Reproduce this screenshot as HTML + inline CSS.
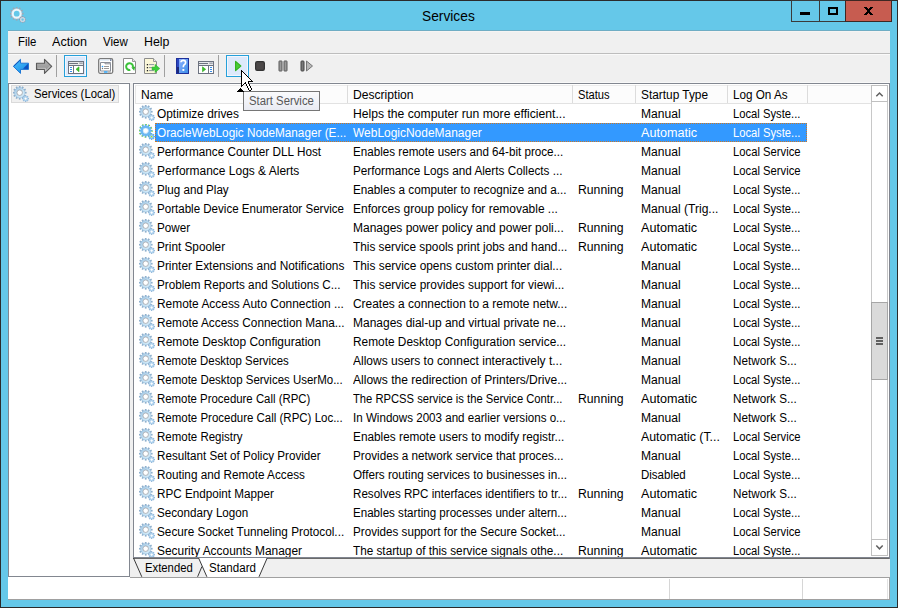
<!DOCTYPE html>
<html><head><meta charset="utf-8">
<style>
*{margin:0;padding:0;box-sizing:border-box}
html,body{width:898px;height:608px;overflow:hidden}
body{position:relative;background:#65c8e9;font-family:"Liberation Sans",sans-serif;font-size:12px;color:#000}
.a{position:absolute}
.t{position:absolute;white-space:pre;line-height:14px;transform-origin:0 0}
svg{position:absolute;display:block}
</style></head><body>
<svg width="0" height="0" style="position:absolute"><defs><symbol id="gear" viewBox="0 0 16 16"><g fill="#8eafcc"><rect x="5.85" y="-0.20" width="1.7" height="2.4" transform="rotate(0 6.7 6.7)"/><rect x="5.85" y="-0.20" width="1.7" height="2.4" transform="rotate(30 6.7 6.7)"/><rect x="5.85" y="-0.20" width="1.7" height="2.4" transform="rotate(60 6.7 6.7)"/><rect x="5.85" y="-0.20" width="1.7" height="2.4" transform="rotate(90 6.7 6.7)"/><rect x="5.85" y="-0.20" width="1.7" height="2.4" transform="rotate(120 6.7 6.7)"/><rect x="5.85" y="-0.20" width="1.7" height="2.4" transform="rotate(150 6.7 6.7)"/><rect x="5.85" y="-0.20" width="1.7" height="2.4" transform="rotate(180 6.7 6.7)"/><rect x="5.85" y="-0.20" width="1.7" height="2.4" transform="rotate(210 6.7 6.7)"/><rect x="5.85" y="-0.20" width="1.7" height="2.4" transform="rotate(240 6.7 6.7)"/><rect x="5.85" y="-0.20" width="1.7" height="2.4" transform="rotate(270 6.7 6.7)"/><rect x="5.85" y="-0.20" width="1.7" height="2.4" transform="rotate(300 6.7 6.7)"/><rect x="5.85" y="-0.20" width="1.7" height="2.4" transform="rotate(330 6.7 6.7)"/></g><linearGradient id="gr" x1="0" y1="0" x2="1" y2="1"><stop offset="0" stop-color="#a9cde8"/><stop offset="1" stop-color="#d6eefb"/></linearGradient><circle cx="6.7" cy="6.7" r="4.05" fill="none" stroke="url(#gr)" stroke-width="2.5"/><circle cx="6.7" cy="6.7" r="5.25" fill="none" stroke="#93b6d6" stroke-width="0.5"/><circle cx="6.7" cy="6.7" r="2.75" fill="#fff" stroke="#8f959e" stroke-width="0.7"/><g fill="#8fb3d6"><rect x="11.90" y="9.20" width="1.4" height="1.6" transform="rotate(0 12.6 12.6)"/><rect x="11.90" y="9.20" width="1.4" height="1.6" transform="rotate(45 12.6 12.6)"/><rect x="11.90" y="9.20" width="1.4" height="1.6" transform="rotate(90 12.6 12.6)"/><rect x="11.90" y="9.20" width="1.4" height="1.6" transform="rotate(135 12.6 12.6)"/><rect x="11.90" y="9.20" width="1.4" height="1.6" transform="rotate(180 12.6 12.6)"/><rect x="11.90" y="9.20" width="1.4" height="1.6" transform="rotate(225 12.6 12.6)"/><rect x="11.90" y="9.20" width="1.4" height="1.6" transform="rotate(270 12.6 12.6)"/><rect x="11.90" y="9.20" width="1.4" height="1.6" transform="rotate(315 12.6 12.6)"/></g><circle cx="12.6" cy="12.6" r="1.9" fill="none" stroke="#acd0ec" stroke-width="1.6"/><circle cx="12.6" cy="12.6" r="0.9" fill="#fff"/></symbol><symbol id="gsel" viewBox="0 0 16 16"><g fill="#58ace8"><rect x="5.85" y="-0.20" width="1.7" height="2.4" transform="rotate(0 6.7 6.7)"/><rect x="5.85" y="-0.20" width="1.7" height="2.4" transform="rotate(30 6.7 6.7)"/><rect x="5.85" y="-0.20" width="1.7" height="2.4" transform="rotate(60 6.7 6.7)"/><rect x="5.85" y="-0.20" width="1.7" height="2.4" transform="rotate(90 6.7 6.7)"/><rect x="5.85" y="-0.20" width="1.7" height="2.4" transform="rotate(120 6.7 6.7)"/><rect x="5.85" y="-0.20" width="1.7" height="2.4" transform="rotate(150 6.7 6.7)"/><rect x="5.85" y="-0.20" width="1.7" height="2.4" transform="rotate(180 6.7 6.7)"/><rect x="5.85" y="-0.20" width="1.7" height="2.4" transform="rotate(210 6.7 6.7)"/><rect x="5.85" y="-0.20" width="1.7" height="2.4" transform="rotate(240 6.7 6.7)"/><rect x="5.85" y="-0.20" width="1.7" height="2.4" transform="rotate(270 6.7 6.7)"/><rect x="5.85" y="-0.20" width="1.7" height="2.4" transform="rotate(300 6.7 6.7)"/><rect x="5.85" y="-0.20" width="1.7" height="2.4" transform="rotate(330 6.7 6.7)"/></g><g fill="#8cd81a"><rect x="5.80" y="-0.30" width="1.1" height="1.1" transform="rotate(8 6.7 6.7)"/><rect x="5.80" y="-0.30" width="1.1" height="1.1" transform="rotate(38 6.7 6.7)"/><rect x="5.80" y="-0.30" width="1.1" height="1.1" transform="rotate(68 6.7 6.7)"/><rect x="5.80" y="-0.30" width="1.1" height="1.1" transform="rotate(98 6.7 6.7)"/><rect x="5.80" y="-0.30" width="1.1" height="1.1" transform="rotate(128 6.7 6.7)"/><rect x="5.80" y="-0.30" width="1.1" height="1.1" transform="rotate(158 6.7 6.7)"/><rect x="5.80" y="-0.30" width="1.1" height="1.1" transform="rotate(188 6.7 6.7)"/><rect x="5.80" y="-0.30" width="1.1" height="1.1" transform="rotate(218 6.7 6.7)"/><rect x="5.80" y="-0.30" width="1.1" height="1.1" transform="rotate(248 6.7 6.7)"/><rect x="5.80" y="-0.30" width="1.1" height="1.1" transform="rotate(278 6.7 6.7)"/><rect x="5.80" y="-0.30" width="1.1" height="1.1" transform="rotate(308 6.7 6.7)"/><rect x="5.80" y="-0.30" width="1.1" height="1.1" transform="rotate(338 6.7 6.7)"/></g><circle cx="6.7" cy="6.7" r="4.05" fill="none" stroke="#6ab8f2" stroke-width="2.5"/><circle cx="6.7" cy="6.7" r="2.75" fill="#fff" stroke="#7fbff0" stroke-width="0.5"/><g fill="#5aaae6"><rect x="11.90" y="9.20" width="1.4" height="1.6" transform="rotate(0 12.6 12.6)"/><rect x="11.90" y="9.20" width="1.4" height="1.6" transform="rotate(45 12.6 12.6)"/><rect x="11.90" y="9.20" width="1.4" height="1.6" transform="rotate(90 12.6 12.6)"/><rect x="11.90" y="9.20" width="1.4" height="1.6" transform="rotate(135 12.6 12.6)"/><rect x="11.90" y="9.20" width="1.4" height="1.6" transform="rotate(180 12.6 12.6)"/><rect x="11.90" y="9.20" width="1.4" height="1.6" transform="rotate(225 12.6 12.6)"/><rect x="11.90" y="9.20" width="1.4" height="1.6" transform="rotate(270 12.6 12.6)"/><rect x="11.90" y="9.20" width="1.4" height="1.6" transform="rotate(315 12.6 12.6)"/></g><circle cx="12.6" cy="12.6" r="1.9" fill="none" stroke="#78bdf0" stroke-width="1.6"/><circle cx="12.6" cy="12.6" r="0.9" fill="#9be030"/></symbol></defs></svg>
<div class="a" style="left:0;top:0;width:898px;height:608px;border:1px solid #2b2b2b"></div>
<div class="a" style="left:8px;top:30px;width:882px;height:570px;background:#f0f0f0"></div>
<div class="a" style="left:8px;top:30px;width:882px;height:1px;background:#6fadc4"></div>
<div class="a" style="left:8px;top:31px;width:882px;height:1px;background:#f6f4f3"></div>
<svg style="left:10px;top:7px" width="16" height="16" viewBox="0 0 16 16"><rect x="5.85" y="-0.2" width="1.7" height="2.4" fill="#9aa6b4" transform="rotate(0 6.7 6.7)"/><rect x="5.85" y="-0.2" width="1.7" height="2.4" fill="#9aa6b4" transform="rotate(30 6.7 6.7)"/><rect x="5.85" y="-0.2" width="1.7" height="2.4" fill="#9aa6b4" transform="rotate(60 6.7 6.7)"/><rect x="5.85" y="-0.2" width="1.7" height="2.4" fill="#9aa6b4" transform="rotate(90 6.7 6.7)"/><rect x="5.85" y="-0.2" width="1.7" height="2.4" fill="#9aa6b4" transform="rotate(120 6.7 6.7)"/><rect x="5.85" y="-0.2" width="1.7" height="2.4" fill="#9aa6b4" transform="rotate(150 6.7 6.7)"/><rect x="5.85" y="-0.2" width="1.7" height="2.4" fill="#9aa6b4" transform="rotate(180 6.7 6.7)"/><rect x="5.85" y="-0.2" width="1.7" height="2.4" fill="#9aa6b4" transform="rotate(210 6.7 6.7)"/><rect x="5.85" y="-0.2" width="1.7" height="2.4" fill="#9aa6b4" transform="rotate(240 6.7 6.7)"/><rect x="5.85" y="-0.2" width="1.7" height="2.4" fill="#9aa6b4" transform="rotate(270 6.7 6.7)"/><rect x="5.85" y="-0.2" width="1.7" height="2.4" fill="#9aa6b4" transform="rotate(300 6.7 6.7)"/><rect x="5.85" y="-0.2" width="1.7" height="2.4" fill="#9aa6b4" transform="rotate(330 6.7 6.7)"/><circle cx="6.7" cy="6.7" r="4.1" fill="none" stroke="#eef6fb" stroke-width="2.4"/><circle cx="6.7" cy="6.7" r="5.25" fill="none" stroke="#a9b9c9" stroke-width="0.5"/><rect x="11.9" y="9.2" width="1.4" height="1.6" fill="#8b9bb0" transform="rotate(0 12.6 12.6)"/><rect x="11.9" y="9.2" width="1.4" height="1.6" fill="#8b9bb0" transform="rotate(45 12.6 12.6)"/><rect x="11.9" y="9.2" width="1.4" height="1.6" fill="#8b9bb0" transform="rotate(90 12.6 12.6)"/><rect x="11.9" y="9.2" width="1.4" height="1.6" fill="#8b9bb0" transform="rotate(135 12.6 12.6)"/><rect x="11.9" y="9.2" width="1.4" height="1.6" fill="#8b9bb0" transform="rotate(180 12.6 12.6)"/><rect x="11.9" y="9.2" width="1.4" height="1.6" fill="#8b9bb0" transform="rotate(225 12.6 12.6)"/><rect x="11.9" y="9.2" width="1.4" height="1.6" fill="#8b9bb0" transform="rotate(270 12.6 12.6)"/><rect x="11.9" y="9.2" width="1.4" height="1.6" fill="#8b9bb0" transform="rotate(315 12.6 12.6)"/><circle cx="12.6" cy="12.6" r="1.9" fill="none" stroke="#c9d6e2" stroke-width="1.5"/></svg>
<div class="t" style="left:422px;top:6px;font-size:15.5px;line-height:20px;transform:scaleX(0.8881);">Services</div>
<div class="a" style="left:791px;top:0;width:55px;height:22px;border:1px solid #3a3a3a;background:#65c8e9"></div>
<div class="a" style="left:819px;top:0;width:1px;height:22px;background:#3a3a3a"></div>
<div class="a" style="left:845px;top:0;width:47px;height:22px;border:1px solid #3d2723;background:#c75c50"></div>
<div class="a" style="left:800px;top:12px;width:10px;height:3px;background:#000"></div>
<div class="a" style="left:828px;top:7px;width:10px;height:8px;border:2px solid #000"></div>
<svg style="left:864px;top:7px" width="9" height="8" viewBox="0 0 9 8" shape-rendering="crispEdges"><path d="M0 0h1v1h-1zM1 0h1v1h-1zM2 0h1v1h-1zM6 0h1v1h-1zM7 0h1v1h-1zM8 0h1v1h-1zM1 1h1v1h-1zM2 1h1v1h-1zM3 1h1v1h-1zM5 1h1v1h-1zM6 1h1v1h-1zM7 1h1v1h-1zM2 2h1v1h-1zM3 2h1v1h-1zM4 2h1v1h-1zM5 2h1v1h-1zM6 2h1v1h-1zM3 3h1v1h-1zM4 3h1v1h-1zM5 3h1v1h-1zM3 4h1v1h-1zM4 4h1v1h-1zM5 4h1v1h-1zM2 5h1v1h-1zM3 5h1v1h-1zM4 5h1v1h-1zM5 5h1v1h-1zM6 5h1v1h-1zM1 6h1v1h-1zM2 6h1v1h-1zM3 6h1v1h-1zM5 6h1v1h-1zM6 6h1v1h-1zM7 6h1v1h-1zM0 7h1v1h-1zM1 7h1v1h-1zM2 7h1v1h-1zM6 7h1v1h-1zM7 7h1v1h-1zM8 7h1v1h-1z" fill="#000"/></svg>
<div class="t" style="left:18px;top:35px;transform:scaleX(0.9474);">File</div>
<div class="t" style="left:52px;top:35px;transform:scaleX(1.0485);">Action</div>
<div class="t" style="left:103px;top:35px;transform:scaleX(0.9577);">View</div>
<div class="t" style="left:144px;top:35px;transform:scaleX(1.0292);">Help</div>
<div class="a" style="left:8px;top:53px;width:882px;height:1px;background:#bdbdbd"></div>
<div class="a" style="left:8px;top:54px;width:882px;height:1px;background:#fafafa"></div>
<div class="a" style="left:56px;top:55px;width:1px;height:22px;background:#a0a0a0"></div>
<div class="a" style="left:164px;top:55px;width:1px;height:22px;background:#a0a0a0"></div>
<div class="a" style="left:218px;top:55px;width:1px;height:22px;background:#a0a0a0"></div>
<div class="a" style="left:64px;top:55px;width:23px;height:22px;border:1px solid #26a0da;background:#dde9fb;box-shadow:inset 0 0 0 1px #f2f7fe"></div>
<div class="a" style="left:226px;top:55px;width:23px;height:22px;border:1px solid #26a0da;background:#dde9fb;box-shadow:inset 0 0 0 1px #f2f7fe"></div>
<svg style="left:12px;top:58px" width="18" height="17" viewBox="0 0 18 17"><defs><linearGradient id="gb" x1="0" y1="0" x2="1" y2="1"><stop offset="0" stop-color="#4cc0ff"/><stop offset="0.6" stop-color="#2aa0ee"/><stop offset="1" stop-color="#0a58c8"/></linearGradient></defs><path d="M1.3 8.3L8.5 1.3V5.2H16.5V11.4H8.5V15.4Z" fill="url(#gb)" stroke="#1f78d6" stroke-width="1" stroke-linejoin="round"/><path d="M1.8 8.3L8 2.3" stroke="#1050b8" stroke-width="1"/><path d="M11 10.8L16 5.8V11Z" fill="#0c4fc0"/></svg>
<svg style="left:35px;top:58px" width="18" height="17" viewBox="0 0 18 17"><defs><linearGradient id="gf" x1="0" y1="0" x2="0" y2="1"><stop offset="0" stop-color="#b4b4b4"/><stop offset="1" stop-color="#8c8c8c"/></linearGradient></defs><path d="M16.7 8.3L9.5 1.3V5.2H1.5V11.4H9.5V15.4Z" fill="url(#gf)" stroke="#5a5a5a" stroke-width="1.1" stroke-linejoin="round"/><path d="M2.6 10.3H10.4V13L15.2 8.3" fill="none" stroke="#d8d8d8" stroke-width="0.7"/></svg>
<svg style="left:68px;top:61px" width="16" height="13" viewBox="0 0 16 13"><rect x="0.5" y="0.5" width="15" height="12" fill="#fff" stroke="#6d7380"/><rect x="1" y="1" width="14" height="4" fill="#e8e9ec"/><path d="M1 2.5H10M1 4.5H15" stroke="#6d7380" stroke-width="1"/><rect x="11.5" y="1.6" width="1.2" height="1.2" fill="#6d7380"/><rect x="13.3" y="1.6" width="1.2" height="1.2" fill="#6d7380"/><path d="M5.5 5V12.5" stroke="#6d7380"/><path d="M2 6.5H4M2 8.5H4M2 10.5H4" stroke="#3a8ee8" stroke-width="1"/><path d="M8 8.3L11 5.8V10.8Z" fill="#3cbf2a" stroke="#2fa81e" stroke-width="0.6"/></svg>
<svg style="left:98px;top:58px" width="16" height="16" viewBox="0 0 16 16"><rect x="0.7" y="0.7" width="14" height="14.6" rx="1.5" fill="#fff" stroke="#7a7a7a" stroke-width="1.3"/><rect x="2" y="1.6" width="9" height="1" fill="#d6e6f7"/><rect x="12" y="1.4" width="1.4" height="1.4" fill="#566890"/><path d="M2.5 4.5H7V5.8H12.5V13H2.5Z" fill="#fff" stroke="#8a8e98" stroke-width="1"/><path d="M7 4.5H12.5V5.8" fill="none" stroke="#8a8e98" stroke-width="1"/><circle cx="4.5" cy="8.5" r="0.8" fill="#2aa0ff"/><circle cx="4.5" cy="10.5" r="0.7" fill="#777"/><path d="M6 8.5H11M6 10.5H11" stroke="#999" stroke-width="1"/><rect x="6" y="13.3" width="3.5" height="1.4" fill="#2aa8ff"/><rect x="10" y="13.3" width="3" height="1.4" fill="#b0b0b0"/></svg>
<svg style="left:123px;top:58px" width="14" height="16" viewBox="0 0 14 16"><path d="M0.5 0.5H9.5L12.5 3.5V15.5H0.5Z" fill="#fff" stroke="#8c8c8c" stroke-width="1"/><path d="M9.5 0.5V3.5H12.5" fill="#e8e8e8" stroke="#9a9a9a" stroke-width="1"/><path d="M7.3 11.9A3.4 3.4 0 1 1 9.9 9.2" fill="none" stroke="#3cc23a" stroke-width="2"/><path d="M8.3 9.6L12.3 8.6L11.2 12.8Z" fill="#34b832"/></svg>
<svg style="left:144px;top:58px" width="17" height="16" viewBox="0 0 17 16"><path d="M0.5 0.5H9.5L12.5 3.5V15.5H0.5Z" fill="#fbf7d8" stroke="#8c8c8c" stroke-width="1"/><path d="M9.5 0.5V3.5H12.5" fill="#eee" stroke="#9a9a9a" stroke-width="1"/><rect x="2.8" y="6" width="1.3" height="1.3" fill="#222"/><rect x="2.8" y="9" width="1.3" height="1.3" fill="#222"/><rect x="2.8" y="12" width="1.3" height="1.3" fill="#222"/><path d="M5 6.6H10M5 9.6H10M5 12.6H10" stroke="#8d94a0" stroke-width="1"/><path d="M8 9H11V6.3L15.8 10.5L11 14.7V12H8Z" fill="#3ccc3a" stroke="#34b232" stroke-width="0.5"/></svg>
<svg style="left:176px;top:58px" width="13" height="16" viewBox="0 0 13 16"><defs><linearGradient id="gh" x1="0" y1="0" x2="1" y2="1"><stop offset="0" stop-color="#8cb0ff"/><stop offset="1" stop-color="#3c8ee8"/></linearGradient></defs><rect x="0" y="0" width="13" height="16" fill="#1d2f9a"/><rect x="3" y="1" width="9" height="14" fill="url(#gh)"/><rect x="1" y="1" width="2" height="8" fill="#2a47c0"/><rect x="1" y="9" width="2" height="6" fill="#1d2a7a"/><path d="M5 4.3Q5 2.3 7.3 2.3Q9.6 2.3 9.6 4.5Q9.6 6 8.2 6.8Q7.3 7.4 7.3 9.3" fill="none" stroke="#fff" stroke-width="1.7"/><rect x="6.4" y="11" width="1.9" height="1.9" fill="#fff"/></svg>
<svg style="left:198px;top:61px" width="16" height="13" viewBox="0 0 16 13"><rect x="0.5" y="0.5" width="15" height="12" fill="#fff" stroke="#6d7380"/><rect x="1" y="1" width="14" height="4" fill="#e8e9ec"/><path d="M1 2.5H10M1 4.5H15" stroke="#6d7380" stroke-width="1"/><rect x="11.5" y="1.6" width="1.2" height="1.2" fill="#6d7380"/><rect x="13.3" y="1.6" width="1.2" height="1.2" fill="#6d7380"/><path d="M10.5 5V12.5" stroke="#6d7380"/><path d="M12 6.5H14M12 8.5H14M12 10.5H14" stroke="#3a8ee8" stroke-width="1"/><path d="M4.5 5.8L7.7 8.3L4.5 10.8Z" fill="#3cbf2a" stroke="#2fa81e" stroke-width="0.6"/></svg>
<svg style="left:234px;top:60px" width="8" height="12" viewBox="0 0 8 12"><path d="M1.6 1.4L6.8 6L1.6 10.6Z" fill="#4ccc3a" stroke="#33b322" stroke-width="1.2" stroke-linejoin="round"/></svg>
<svg style="left:255px;top:61px" width="10" height="10" viewBox="0 0 10 10"><rect x="0.6" y="0.6" width="8.8" height="8.8" rx="1.6" fill="#4c4848" stroke="#333" stroke-width="1.2"/></svg>
<svg style="left:278px;top:60px" width="10" height="12" viewBox="0 0 10 12"><rect x="1" y="1" width="3" height="10" rx="0.4" fill="#9a9a9a" stroke="#595959" stroke-width="1"/><rect x="6" y="1" width="3" height="10" rx="0.4" fill="#9a9a9a" stroke="#595959" stroke-width="1"/></svg>
<svg style="left:300px;top:60px" width="14" height="12" viewBox="0 0 14 12"><rect x="1" y="1" width="3" height="10" rx="0.8" fill="#7a7a7a" stroke="#444" stroke-width="1"/><path d="M6.5 1L12.5 6L6.5 11Z" fill="#b8b8b8" stroke="#777" stroke-width="1" stroke-linejoin="round"/></svg>
<div class="a" style="left:8px;top:82px;width:882px;height:1px;background:#f8f8f8"></div>
<div class="a" style="left:8px;top:83px;width:122px;height:494px;background:#fff;border:1px solid #828790"></div>
<div class="a" style="left:11px;top:85px;width:108px;height:18px;background:#f0f0f0;border:1px solid #dadada"></div>
<svg style="left:13px;top:86px" width="16" height="16" viewBox="0 0 16 16"><use href="#gear"/></svg>
<div class="t" style="left:34px;top:87px;transform:scaleX(0.9447);">Services (Local)</div>
<div class="a" style="left:133px;top:83px;width:757px;height:476px;background:#fff;border:1px solid #828790;border-right:none"></div>
<div class="a" style="left:135px;top:85px;width:736px;height:19px;background:#fcfcfc;border-top:1px solid #ececec;border-left:1px solid #e6e6e6;border-bottom:1px solid #e2e2e2"></div>
<div class="a" style="left:347px;top:85px;width:1px;height:18px;background:#dcdcdc"></div>
<div class="a" style="left:572px;top:85px;width:1px;height:18px;background:#dcdcdc"></div>
<div class="a" style="left:635px;top:85px;width:1px;height:18px;background:#dcdcdc"></div>
<div class="a" style="left:727px;top:85px;width:1px;height:18px;background:#dcdcdc"></div>
<div class="a" style="left:807px;top:85px;width:1px;height:18px;background:#dcdcdc"></div>
<div class="t" style="left:141px;top:88px;transform:scaleX(1.0062);">Name</div>
<div class="t" style="left:353px;top:88px;transform:scaleX(1.0085);">Description</div>
<div class="t" style="left:578px;top:88px;transform:scaleX(0.9294);">Status</div>
<div class="t" style="left:641px;top:88px;transform:scaleX(0.9882);">Startup Type</div>
<div class="t" style="left:733px;top:88px;transform:scaleX(0.9750);">Log On As</div>
<div class="a" style="left:155px;top:123px;width:652px;height:19px;background:#3399ff"></div>
<div class="a" style="left:155px;top:123px;width:652px;height:19px;border:1px dotted #cc7722"></div>
<svg style="left:139px;top:105px" width="16" height="16" viewBox="0 0 16 16"><use href="#gear"/></svg>
<div class="t" style="left:157px;top:107px;transform:scaleX(0.9902);">Optimize drives</div>
<div class="t" style="left:353px;top:107px;transform:scaleX(1.0129);">Helps the computer run more efficient...</div>
<div class="t" style="left:641px;top:107px;transform:scaleX(1.0077);">Manual</div>
<div class="t" style="left:733px;top:107px;transform:scaleX(0.9366);">Local Syste...</div>
<svg style="left:139px;top:124px" width="16" height="16" viewBox="0 0 16 16"><use href="#gsel"/></svg>
<div class="t" style="left:157px;top:126px;color:#fff;transform:scaleX(0.9792);">OracleWebLogic NodeManager (E...</div>
<div class="t" style="left:353px;top:126px;color:#fff;transform:scaleX(0.9969);">WebLogicNodeManager</div>
<div class="t" style="left:641px;top:126px;color:#fff;transform:scaleX(1.0509);">Automatic</div>
<div class="t" style="left:733px;top:126px;color:#fff;transform:scaleX(0.9366);">Local Syste...</div>
<svg style="left:139px;top:143px" width="16" height="16" viewBox="0 0 16 16"><use href="#gear"/></svg>
<div class="t" style="left:157px;top:145px;transform:scaleX(0.9786);">Performance Counter DLL Host</div>
<div class="t" style="left:353px;top:145px;transform:scaleX(0.9699);">Enables remote users and 64-bit proce...</div>
<div class="t" style="left:641px;top:145px;transform:scaleX(1.0077);">Manual</div>
<div class="t" style="left:733px;top:145px;transform:scaleX(0.9389);">Local Service</div>
<svg style="left:139px;top:162px" width="16" height="16" viewBox="0 0 16 16"><use href="#gear"/></svg>
<div class="t" style="left:157px;top:164px;transform:scaleX(0.9972);">Performance Logs &amp; Alerts</div>
<div class="t" style="left:353px;top:164px;transform:scaleX(0.9784);">Performance Logs and Alerts Collects ...</div>
<div class="t" style="left:641px;top:164px;transform:scaleX(1.0077);">Manual</div>
<div class="t" style="left:733px;top:164px;transform:scaleX(0.9389);">Local Service</div>
<svg style="left:139px;top:181px" width="16" height="16" viewBox="0 0 16 16"><use href="#gear"/></svg>
<div class="t" style="left:157px;top:183px;transform:scaleX(0.9676);">Plug and Play</div>
<div class="t" style="left:353px;top:183px;transform:scaleX(0.9761);">Enables a computer to recognize and a...</div>
<div class="t" style="left:578px;top:183px;transform:scaleX(1.0182);">Running</div>
<div class="t" style="left:641px;top:183px;transform:scaleX(1.0077);">Manual</div>
<div class="t" style="left:733px;top:183px;transform:scaleX(0.9366);">Local Syste...</div>
<svg style="left:139px;top:200px" width="16" height="16" viewBox="0 0 16 16"><use href="#gear"/></svg>
<div class="t" style="left:157px;top:202px;transform:scaleX(0.9634);">Portable Device Enumerator Service</div>
<div class="t" style="left:353px;top:202px;transform:scaleX(0.9971);">Enforces group policy for removable ...</div>
<div class="t" style="left:641px;top:202px;transform:scaleX(1.0066);">Manual (Trig...</div>
<div class="t" style="left:733px;top:202px;transform:scaleX(0.9366);">Local Syste...</div>
<svg style="left:139px;top:219px" width="16" height="16" viewBox="0 0 16 16"><use href="#gear"/></svg>
<div class="t" style="left:157px;top:221px;transform:scaleX(0.9735);">Power</div>
<div class="t" style="left:353px;top:221px;transform:scaleX(1.0000);">Manages power policy and power poli...</div>
<div class="t" style="left:578px;top:221px;transform:scaleX(1.0182);">Running</div>
<div class="t" style="left:641px;top:221px;transform:scaleX(1.0509);">Automatic</div>
<div class="t" style="left:733px;top:221px;transform:scaleX(0.9366);">Local Syste...</div>
<svg style="left:139px;top:238px" width="16" height="16" viewBox="0 0 16 16"><use href="#gear"/></svg>
<div class="t" style="left:157px;top:240px;transform:scaleX(0.9812);">Print Spooler</div>
<div class="t" style="left:353px;top:240px;transform:scaleX(0.9852);">This service spools print jobs and hand...</div>
<div class="t" style="left:578px;top:240px;transform:scaleX(1.0182);">Running</div>
<div class="t" style="left:641px;top:240px;transform:scaleX(1.0509);">Automatic</div>
<div class="t" style="left:733px;top:240px;transform:scaleX(0.9366);">Local Syste...</div>
<svg style="left:139px;top:257px" width="16" height="16" viewBox="0 0 16 16"><use href="#gear"/></svg>
<div class="t" style="left:157px;top:259px;transform:scaleX(0.9889);">Printer Extensions and Notifications</div>
<div class="t" style="left:353px;top:259px;transform:scaleX(0.9895);">This service opens custom printer dial...</div>
<div class="t" style="left:641px;top:259px;transform:scaleX(1.0077);">Manual</div>
<div class="t" style="left:733px;top:259px;transform:scaleX(0.9366);">Local Syste...</div>
<svg style="left:139px;top:276px" width="16" height="16" viewBox="0 0 16 16"><use href="#gear"/></svg>
<div class="t" style="left:157px;top:278px;transform:scaleX(0.9759);">Problem Reports and Solutions C...</div>
<div class="t" style="left:353px;top:278px;transform:scaleX(0.9906);">This service provides support for viewi...</div>
<div class="t" style="left:641px;top:278px;transform:scaleX(1.0077);">Manual</div>
<div class="t" style="left:733px;top:278px;transform:scaleX(0.9366);">Local Syste...</div>
<svg style="left:139px;top:295px" width="16" height="16" viewBox="0 0 16 16"><use href="#gear"/></svg>
<div class="t" style="left:157px;top:297px;transform:scaleX(0.9936);">Remote Access Auto Connection ...</div>
<div class="t" style="left:353px;top:297px;transform:scaleX(0.9944);">Creates a connection to a remote netw...</div>
<div class="t" style="left:641px;top:297px;transform:scaleX(1.0077);">Manual</div>
<div class="t" style="left:733px;top:297px;transform:scaleX(0.9366);">Local Syste...</div>
<svg style="left:139px;top:314px" width="16" height="16" viewBox="0 0 16 16"><use href="#gear"/></svg>
<div class="t" style="left:157px;top:316px;transform:scaleX(0.9837);">Remote Access Connection Mana...</div>
<div class="t" style="left:353px;top:316px;transform:scaleX(0.9986);">Manages dial-up and virtual private ne...</div>
<div class="t" style="left:641px;top:316px;transform:scaleX(1.0077);">Manual</div>
<div class="t" style="left:733px;top:316px;transform:scaleX(0.9366);">Local Syste...</div>
<svg style="left:139px;top:333px" width="16" height="16" viewBox="0 0 16 16"><use href="#gear"/></svg>
<div class="t" style="left:157px;top:335px;transform:scaleX(0.9970);">Remote Desktop Configuration</div>
<div class="t" style="left:353px;top:335px;transform:scaleX(0.9893);">Remote Desktop Configuration service...</div>
<div class="t" style="left:641px;top:335px;transform:scaleX(1.0077);">Manual</div>
<div class="t" style="left:733px;top:335px;transform:scaleX(0.9366);">Local Syste...</div>
<svg style="left:139px;top:352px" width="16" height="16" viewBox="0 0 16 16"><use href="#gear"/></svg>
<div class="t" style="left:157px;top:354px;transform:scaleX(0.9500);">Remote Desktop Services</div>
<div class="t" style="left:353px;top:354px;transform:scaleX(0.9990);">Allows users to connect interactively t...</div>
<div class="t" style="left:641px;top:354px;transform:scaleX(1.0077);">Manual</div>
<div class="t" style="left:733px;top:354px;transform:scaleX(0.9750);">Network S...</div>
<svg style="left:139px;top:371px" width="16" height="16" viewBox="0 0 16 16"><use href="#gear"/></svg>
<div class="t" style="left:157px;top:373px;transform:scaleX(0.9570);">Remote Desktop Services UserMo...</div>
<div class="t" style="left:353px;top:373px;transform:scaleX(1.0038);">Allows the redirection of Printers/Drive...</div>
<div class="t" style="left:641px;top:373px;transform:scaleX(1.0077);">Manual</div>
<div class="t" style="left:733px;top:373px;transform:scaleX(0.9366);">Local Syste...</div>
<svg style="left:139px;top:390px" width="16" height="16" viewBox="0 0 16 16"><use href="#gear"/></svg>
<div class="t" style="left:157px;top:392px;transform:scaleX(0.9503);">Remote Procedure Call (RPC)</div>
<div class="t" style="left:353px;top:392px;transform:scaleX(0.9345);">The RPCSS service is the Service Contr...</div>
<div class="t" style="left:578px;top:392px;transform:scaleX(1.0182);">Running</div>
<div class="t" style="left:641px;top:392px;transform:scaleX(1.0509);">Automatic</div>
<div class="t" style="left:733px;top:392px;transform:scaleX(0.9750);">Network S...</div>
<svg style="left:139px;top:409px" width="16" height="16" viewBox="0 0 16 16"><use href="#gear"/></svg>
<div class="t" style="left:157px;top:411px;transform:scaleX(0.9570);">Remote Procedure Call (RPC) Loc...</div>
<div class="t" style="left:353px;top:411px;transform:scaleX(0.9667);">In Windows 2003 and earlier versions o...</div>
<div class="t" style="left:641px;top:411px;transform:scaleX(1.0077);">Manual</div>
<div class="t" style="left:733px;top:411px;transform:scaleX(0.9750);">Network S...</div>
<svg style="left:139px;top:428px" width="16" height="16" viewBox="0 0 16 16"><use href="#gear"/></svg>
<div class="t" style="left:157px;top:430px;transform:scaleX(0.9573);">Remote Registry</div>
<div class="t" style="left:353px;top:430px;transform:scaleX(0.9841);">Enables remote users to modify registr...</div>
<div class="t" style="left:641px;top:430px;transform:scaleX(1.0289);">Automatic (T...</div>
<div class="t" style="left:733px;top:430px;transform:scaleX(0.9389);">Local Service</div>
<svg style="left:139px;top:447px" width="16" height="16" viewBox="0 0 16 16"><use href="#gear"/></svg>
<div class="t" style="left:157px;top:449px;transform:scaleX(0.9698);">Resultant Set of Policy Provider</div>
<div class="t" style="left:353px;top:449px;transform:scaleX(0.9744);">Provides a network service that proces...</div>
<div class="t" style="left:641px;top:449px;transform:scaleX(1.0077);">Manual</div>
<div class="t" style="left:733px;top:449px;transform:scaleX(0.9366);">Local Syste...</div>
<svg style="left:139px;top:466px" width="16" height="16" viewBox="0 0 16 16"><use href="#gear"/></svg>
<div class="t" style="left:157px;top:468px;transform:scaleX(0.9768);">Routing and Remote Access</div>
<div class="t" style="left:353px;top:468px;transform:scaleX(0.9761);">Offers routing services to businesses in...</div>
<div class="t" style="left:641px;top:468px;transform:scaleX(0.9587);">Disabled</div>
<div class="t" style="left:733px;top:468px;transform:scaleX(0.9366);">Local Syste...</div>
<svg style="left:139px;top:485px" width="16" height="16" viewBox="0 0 16 16"><use href="#gear"/></svg>
<div class="t" style="left:157px;top:487px;transform:scaleX(0.9733);">RPC Endpoint Mapper</div>
<div class="t" style="left:353px;top:487px;transform:scaleX(0.9673);">Resolves RPC interfaces identifiers to tr...</div>
<div class="t" style="left:578px;top:487px;transform:scaleX(1.0182);">Running</div>
<div class="t" style="left:641px;top:487px;transform:scaleX(1.0509);">Automatic</div>
<div class="t" style="left:733px;top:487px;transform:scaleX(0.9750);">Network S...</div>
<svg style="left:139px;top:504px" width="16" height="16" viewBox="0 0 16 16"><use href="#gear"/></svg>
<div class="t" style="left:157px;top:506px;transform:scaleX(0.9702);">Secondary Logon</div>
<div class="t" style="left:353px;top:506px;transform:scaleX(0.9659);">Enables starting processes under altern...</div>
<div class="t" style="left:641px;top:506px;transform:scaleX(1.0077);">Manual</div>
<div class="t" style="left:733px;top:506px;transform:scaleX(0.9366);">Local Syste...</div>
<svg style="left:139px;top:523px" width="16" height="16" viewBox="0 0 16 16"><use href="#gear"/></svg>
<div class="t" style="left:157px;top:525px;transform:scaleX(0.9811);">Secure Socket Tunneling Protocol...</div>
<div class="t" style="left:353px;top:525px;transform:scaleX(0.9711);">Provides support for the Secure Socket...</div>
<div class="t" style="left:641px;top:525px;transform:scaleX(1.0077);">Manual</div>
<div class="t" style="left:733px;top:525px;transform:scaleX(0.9389);">Local Service</div>
<svg style="left:139px;top:542px" width="16" height="16" viewBox="0 0 16 16"><use href="#gear"/></svg>
<div class="t" style="left:157px;top:544px;transform:scaleX(0.9925);">Security Accounts Manager</div>
<div class="t" style="left:353px;top:544px;transform:scaleX(0.9785);">The startup of this service signals othe...</div>
<div class="t" style="left:578px;top:544px;transform:scaleX(1.0182);">Running</div>
<div class="t" style="left:641px;top:544px;transform:scaleX(1.0509);">Automatic</div>
<div class="t" style="left:733px;top:544px;transform:scaleX(0.9366);">Local Syste...</div>
<div class="a" style="left:133px;top:557px;width:757px;height:1px;background:#80858f"></div>
<div class="a" style="left:133px;top:558px;width:757px;height:1px;background:#6a6a6a"></div>
<div class="a" style="left:134px;top:559px;width:756px;height:18px;background:#f0f0f0"></div>
<div class="a" style="left:889px;top:83px;width:1px;height:476px;background:#80858f"></div>
<div class="a" style="left:871px;top:85px;width:17px;height:471px;background:#fff;border-left:1px solid #c8c8c8;border-right:1px solid #c8c8c8"></div>
<div class="a" style="left:871px;top:85px;width:17px;height:17px;border:1px solid #c0c0c0;background:#fff"></div>
<div class="a" style="left:871px;top:539px;width:17px;height:17px;border:1px solid #c0c0c0;background:#fff"></div>
<svg style="left:874px;top:90px" width="11" height="8" viewBox="0 0 11 8"><path d="M2.3 6.3L5.5 3L8.7 6.3" fill="none" stroke="#606060" stroke-width="1.5"/></svg>
<svg style="left:874px;top:543px" width="11" height="8" viewBox="0 0 11 8"><path d="M2.3 2.5L5.5 5.8L8.7 2.5" fill="none" stroke="#606060" stroke-width="1.5"/></svg>
<div class="a" style="left:871px;top:302px;width:17px;height:78px;border:1px solid #a6a6a6;background:#dadada"></div>
<div class="a" style="left:876px;top:337px;width:7px;height:2px;background:#606060"></div>
<div class="a" style="left:876px;top:340px;width:7px;height:2px;background:#606060"></div>
<div class="a" style="left:876px;top:343px;width:7px;height:2px;background:#606060"></div>
<svg style="left:133px;top:558px" width="140" height="20" viewBox="0 0 140 20"><path d="M65.6 0 L73.9 19 L126 19 L134.2 0 Z" fill="#fff"/><path d="M0.5 0 L8.8 18.8 M68.9 8.6 L64.6 18.8 M65.6 0 L73.9 18.8 M134.2 0 L126 18.8" fill="none" stroke="#3a3a3a" stroke-width="1"/></svg>
<div class="t" style="left:145px;top:561px;transform:scaleX(0.9420);">Extended</div>
<div class="t" style="left:209px;top:561px;transform:scaleX(0.9646);">Standard</div>
<div class="a" style="left:8px;top:577px;width:882px;height:23px;background:#fff;border-bottom:1px solid #a0a0a0;border-right:1px solid #a0a0a0"></div>
<div class="a" style="left:887px;top:579px;width:1px;height:20px;background:#e2e2e2"></div>
<div class="a" style="left:130px;top:577px;width:760px;height:1px;background:#a0a0a0"></div>
<div class="a" style="left:669px;top:579px;width:1px;height:20px;background:#d6d6d6"></div>
<div class="a" style="left:802px;top:579px;width:1px;height:20px;background:#d6d6d6"></div>
<div class="a" style="left:243px;top:91px;width:77px;height:20px;border:1px solid #767676;background:linear-gradient(#fafbfd,#e9ebf3)"></div>
<div class="t" style="left:249px;top:94px;color:#575757;transform:scaleX(0.9441);">Start Service</div>
<svg style="left:237px;top:88px" width="7" height="4" viewBox="0 0 7 4" shape-rendering="crispEdges"><path d="M3 0h1v1h1v1h1v1h1v1h-7v-1h1v-1h1v-1h1z" fill="#000"/></svg>
<svg style="left:241px;top:70px" width="12" height="21" viewBox="0 0 12 21" shape-rendering="crispEdges"><path d="M1 2h1v1h-1zM1 3h1v1h-1zM2 3h1v1h-1zM1 4h1v1h-1zM2 4h1v1h-1zM3 4h1v1h-1zM1 5h1v1h-1zM2 5h1v1h-1zM3 5h1v1h-1zM4 5h1v1h-1zM1 6h1v1h-1zM2 6h1v1h-1zM3 6h1v1h-1zM4 6h1v1h-1zM5 6h1v1h-1zM1 7h1v1h-1zM2 7h1v1h-1zM3 7h1v1h-1zM4 7h1v1h-1zM5 7h1v1h-1zM6 7h1v1h-1zM1 8h1v1h-1zM2 8h1v1h-1zM3 8h1v1h-1zM4 8h1v1h-1zM5 8h1v1h-1zM6 8h1v1h-1zM7 8h1v1h-1zM1 9h1v1h-1zM2 9h1v1h-1zM3 9h1v1h-1zM4 9h1v1h-1zM5 9h1v1h-1zM6 9h1v1h-1zM7 9h1v1h-1zM8 9h1v1h-1zM1 10h1v1h-1zM2 10h1v1h-1zM3 10h1v1h-1zM4 10h1v1h-1zM5 10h1v1h-1zM6 10h1v1h-1zM7 10h1v1h-1zM8 10h1v1h-1zM9 10h1v1h-1zM1 11h1v1h-1zM2 11h1v1h-1zM3 11h1v1h-1zM4 11h1v1h-1zM5 11h1v1h-1zM6 11h1v1h-1zM1 12h1v1h-1zM2 12h1v1h-1zM3 12h1v1h-1zM5 12h1v1h-1zM6 12h1v1h-1zM1 13h1v1h-1zM2 13h1v1h-1zM5 13h1v1h-1zM6 13h1v1h-1zM1 14h1v1h-1zM6 14h1v1h-1zM7 14h1v1h-1zM6 15h1v1h-1zM7 15h1v1h-1zM7 16h1v1h-1zM8 16h1v1h-1zM7 17h1v1h-1zM8 17h1v1h-1zM8 18h1v1h-1zM9 18h1v1h-1zM8 19h1v1h-1zM9 19h1v1h-1z" fill="#fff"/><path d="M0 0h1v1h-1zM0 1h1v1h-1zM1 1h1v1h-1zM0 2h1v1h-1zM2 2h1v1h-1zM0 3h1v1h-1zM3 3h1v1h-1zM0 4h1v1h-1zM4 4h1v1h-1zM0 5h1v1h-1zM5 5h1v1h-1zM0 6h1v1h-1zM6 6h1v1h-1zM0 7h1v1h-1zM7 7h1v1h-1zM0 8h1v1h-1zM8 8h1v1h-1zM0 9h1v1h-1zM9 9h1v1h-1zM0 10h1v1h-1zM10 10h1v1h-1zM0 11h1v1h-1zM7 11h1v1h-1zM8 11h1v1h-1zM9 11h1v1h-1zM10 11h1v1h-1zM11 11h1v1h-1zM0 12h1v1h-1zM4 12h1v1h-1zM7 12h1v1h-1zM0 13h1v1h-1zM3 13h1v1h-1zM4 13h1v1h-1zM7 13h1v1h-1zM0 14h1v1h-1zM2 14h1v1h-1zM5 14h1v1h-1zM8 14h1v1h-1zM0 15h1v1h-1zM1 15h1v1h-1zM5 15h1v1h-1zM8 15h1v1h-1zM0 16h1v1h-1zM6 16h1v1h-1zM9 16h1v1h-1zM6 17h1v1h-1zM9 17h1v1h-1zM7 18h1v1h-1zM10 18h1v1h-1zM7 19h1v1h-1zM10 19h1v1h-1zM8 20h1v1h-1zM9 20h1v1h-1z" fill="#000"/></svg>
</body></html>
